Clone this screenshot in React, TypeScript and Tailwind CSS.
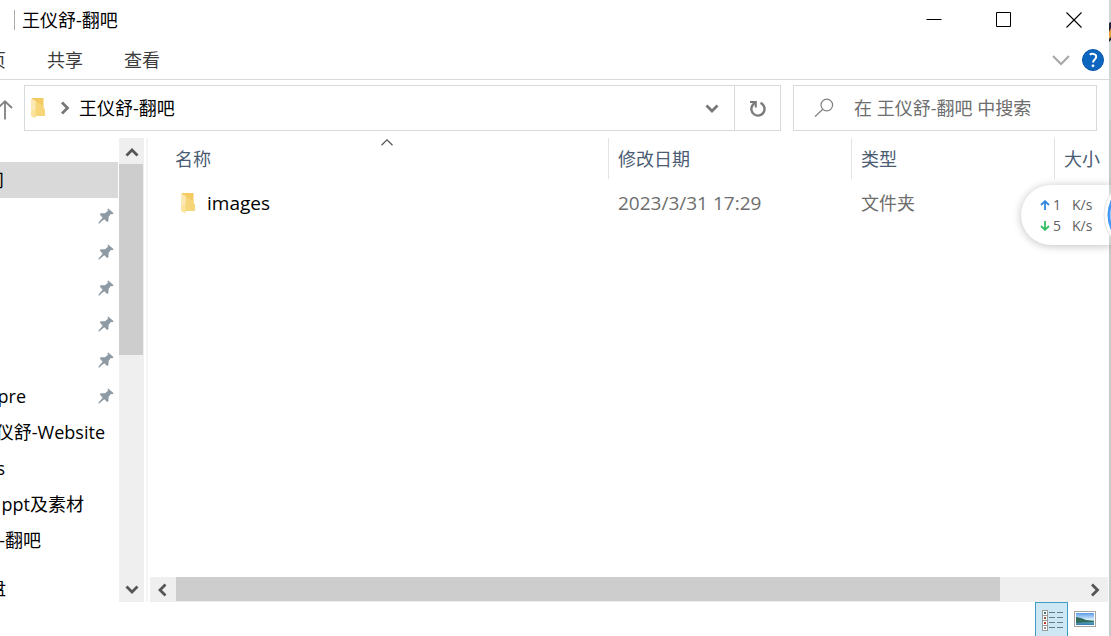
import React from 'react';

type NavEntry = { label: string; width: string; pinned?: boolean; selected?: boolean; gapAbove?: boolean };

const entries: NavEntry[] = [
  { label: '问', width: 'w-1', selected: true },
  { label: '', width: 'w-0', pinned: true },
  { label: '', width: 'w-0', pinned: true },
  { label: '', width: 'w-0', pinned: true },
  { label: '', width: 'w-0', pinned: true },
  { label: '', width: 'w-0', pinned: true },
  { label: 'pre', width: 'w-[26px]', pinned: true },
  { label: '仪舒-Website', width: 'w-[105px]' },
  { label: 's', width: 'w-[5px]' },
  { label: 'ppt及素材', width: 'w-[84px]' },
  { label: '-翻吧', width: 'w-[41px]' },
  { label: '盘', width: 'w-[6px]', gapAbove: true },
];

function FolderIcon() {
  return (
    <svg viewBox="0 0 15 21" className="h-[21px] w-[15px] shrink-0" aria-hidden="true">
      <path d="M1 0H12.5V10L14 11.5V18H1Z" fill="#f3cb62" />
      <path d="M4 3L12.5 8V10.5L14 12V18H4Z" fill="#f7d67a" />
      <path d="M0 0.5L4.5 3V20.5L0 18Z" fill="#fce39c" />
      <path d="M0 0.5L4.5 3V11L0 13Z" fill="#fbe8b4" />
    </svg>
  );
}

function PinIcon() {
  return (
    <svg viewBox="0 0 16 16" className="h-4 w-4 shrink-0" fill="#8f9ba4" aria-hidden="true">
      <path d="M10.2 0.4L15.7 5.2L14.2 6.3L12.8 6L10.6 9L10.4 13.2L9.2 14L6.2 11.3L1 15.8L0.2 15.1L4.6 9.8L1.8 6.6L2.7 5.2L7 5.2L10 2.8L9.5 1.2Z" />
    </svg>
  );
}

type Direction = 'up' | 'down' | 'left' | 'right';
const chevrons: Record<Direction, string> = {
  up: 'M1.5 9.5L7 4L12.5 9.5',
  down: 'M1.5 4.5L7 10L12.5 4.5',
  left: 'M9.5 1.5L4 7L9.5 12.5',
  right: 'M4 1.5L9.5 7L4 12.5',
};

function Chevron({ direction, color }: { direction: Direction; color: string }) {
  return (
    <svg viewBox="0 0 14 14" className="h-[14px] w-[14px] shrink-0" fill="none" stroke={color} strokeWidth="2.8" aria-hidden="true">
      <path d={chevrons[direction]} />
    </svg>
  );
}

function TitleBar() {
  return (
    <header className="flex h-10 shrink-0 items-center pl-[14px]">
      <span className="h-5 w-px bg-[#a8a8a8]" />
      <h1 className="flex-1 pl-[7px] text-black">王仪舒-翻吧</h1>
      <button aria-label="最小化" className="flex h-10 w-[70px] items-center justify-center">
        <svg viewBox="0 0 16 16" className="h-4 w-4" stroke="#000" fill="none"><path d="M0.5 7.5H15.5" /></svg>
      </button>
      <button aria-label="最大化" className="flex h-10 w-[70px] items-center justify-center">
        <svg viewBox="0 0 16 16" className="h-4 w-4" stroke="#000" fill="none"><path d="M0.5 0.5H14.5V14.5H0.5Z" /></svg>
      </button>
      <button aria-label="关闭" className="flex h-10 w-[70px] items-center justify-center">
        <svg viewBox="0 0 16 16" className="h-4 w-4" stroke="#000" fill="none"><path d="M0.5 0.5L15.5 15.5M15.5 0.5L0.5 15.5" strokeWidth="1.1" /></svg>
      </button>
    </header>
  );
}

function Ribbon() {
  return (
    <div className="flex h-10 shrink-0 items-center border-b border-[#d9dadb] text-[#3c3c3c]">
      <button className="flex w-[6px] justify-end overflow-hidden whitespace-nowrap">页</button>
      <button className="ml-[41px]">共享</button>
      <button className="ml-[41px]">查看</button>
      <button aria-label="展开功能区" className="mr-3 ml-auto">
        <svg viewBox="0 0 18 12" className="h-3 w-[18px]" fill="none" stroke="#a6a6a6" strokeWidth="2"><path d="M1 2L9 10L17 2" /></svg>
      </button>
      <button aria-label="帮助" className="mr-[5px]">
        <svg viewBox="0 0 22 22" className="h-[22px] w-[22px]" fill="none">
          <circle cx="11" cy="11" r="10.5" fill="#0c66bf" stroke="#0a55a5" />
          <path d="M7.8 5.8C9 4.6 14.2 4 14.2 7.8C14.2 10.4 11 10.6 11 13.6" stroke="#fff" strokeWidth="2" />
          <circle cx="11" cy="16.8" r="1.4" fill="#fff" />
        </svg>
      </button>
    </div>
  );
}

function AddressBar() {
  return (
    <div className="flex shrink-0 items-center pt-[5px] pr-3 pb-[7px]">
      <button aria-label="向上" className="w-6 shrink-0 pt-1">
        <svg viewBox="0 0 24 20" className="h-5 w-6" fill="none" stroke="#808080" strokeWidth="1.8"><path d="M5 1V19.5M-2 8L5 1.3L12 8" /></svg>
      </button>
      <div className="flex h-[46px] flex-1 items-center border border-[#d9dadb] pl-[6px]">
        <FolderIcon />
        <span className="ml-3"><Chevron direction="right" color="#777" /></span>
        <span className="ml-[7px] flex-1 text-black">王仪舒-翻吧</span>
        <button aria-label="历史记录" className="flex h-full w-[45px] items-center justify-center"><Chevron direction="down" color="#777" /></button>
        <button aria-label="刷新" className="flex h-full w-[46px] items-center justify-center border-l border-[#d9dadb]">
          <svg viewBox="0 0 18 18" className="h-[18px] w-[18px]" fill="none" stroke="#7b7b7b" strokeWidth="2.4">
            <path d="M11.5 3.9A6.6 6.6 0 1 1 4 5.6L6.5 3.4" />
            <path d="M1 3H6.8V8.6" strokeWidth="2" />
          </svg>
        </button>
      </div>
      <label className="ml-3 flex h-[46px] w-[304px] items-center border border-[#d9dadb] pl-5">
        <svg viewBox="0 0 20 20" className="h-5 w-5 shrink-0" fill="none" stroke="#808080" strokeWidth="1.2" aria-hidden="true">
          <circle cx="12.8" cy="7" r="5.8" /><path d="M8.8 11.2L1 18.5" />
        </svg>
        <input
          type="text"
          aria-label="搜索"
          placeholder="在 王仪舒-翻吧 中搜索"
          className="ml-5 min-w-0 flex-1 bg-transparent outline-none placeholder:text-[#6d6d6d] placeholder:opacity-100"
        />
      </label>
    </div>
  );
}

function Sidebar() {
  return (
    <nav className="flex w-[148px] shrink-0">
      <ul className="flex-1 overflow-hidden pt-6">
        {entries.map((entry, i) => (
          <li
            key={i}
            className={`flex h-9 items-center text-black ${entry.selected ? 'mr-px bg-[#d9d9d9]' : ''} ${entry.gapAbove ? 'mt-3' : ''}`}
          >
            <span className={`flex shrink-0 justify-end overflow-hidden whitespace-nowrap ${entry.width}`}>{entry.label}</span>
            {entry.pinned && <span className="mr-[5px] ml-auto"><PinIcon /></span>}
          </li>
        ))}
      </ul>
      <div className="flex w-[25px] flex-col bg-[#efefef]">
        <button aria-label="向上滚动" className="flex h-[26px] shrink-0 items-center justify-center pt-1"><Chevron direction="up" color="#555" /></button>
        <div className="mr-px h-[191px] bg-[#cdcdcd]" />
        <button aria-label="向下滚动" className="mt-auto flex h-[26px] shrink-0 items-center justify-center"><Chevron direction="down" color="#555" /></button>
      </div>
      <div className="ml-[2px] w-[2px] bg-[#f5f5f5]" />
    </nav>
  );
}

function FileList() {
  return (
    <main className="flex min-w-0 flex-1 flex-col">
      <div className="overflow-hidden pl-[18px]">
        <table className="w-full table-fixed border-separate border-spacing-0 text-left whitespace-nowrap">
          <colgroup>
            <col />
            <col className="w-[243px]" />
            <col className="w-[203px]" />
            <col className="w-[55px]" />
          </colgroup>
          <thead className="text-[#4a5c73]">
            <tr className="h-[41px]">
              <th className="relative p-0 pl-[9px] font-normal">
                名称
                <svg viewBox="0 0 12 7" className="absolute top-px left-1/2 h-[7px] w-3 -translate-x-1/2" fill="none" stroke="#555" strokeWidth="1.2" aria-hidden="true">
                  <path d="M0.5 6.2L6 0.8L11.5 6.2" />
                </svg>
              </th>
              <th className="border-l border-[#e3e3e3] p-0 pl-[9px] font-normal">修改日期</th>
              <th className="border-l border-[#e3e3e3] p-0 pl-[9px] font-normal">类型</th>
              <th className="border-l border-[#e3e3e3] p-0 pl-[9px] font-normal">大小</th>
            </tr>
          </thead>
          <tbody className="text-[#6d6d6d]">
            <tr className="h-12">
              <td className="p-0 pl-[15px]">
                <span className="flex items-center gap-[11px] text-[19px] text-black"><FolderIcon />images</span>
              </td>
              <td className="p-0 pl-[10px] text-[19px]">2023/3/31 17:29</td>
              <td className="p-0 pl-[10px]">文件夹</td>
              <td className="p-0" />
            </tr>
          </tbody>
        </table>
      </div>
      <div className="mt-auto mr-px ml-[2px] flex h-[25px] shrink-0 bg-[#efefef]">
        <button aria-label="向左滚动" className="flex w-[26px] items-center justify-center"><Chevron direction="left" color="#555" /></button>
        <div className="mb-px flex-1 bg-[#cdcdcd]" />
        <button aria-label="向右滚动" className="flex w-[108px] items-center justify-end pr-[6px]"><Chevron direction="right" color="#555" /></button>
      </div>
    </main>
  );
}

function StatusBar() {
  const dots = ['#3c7a78', '#8a5a3c', '#c0392b', '#999999'];
  return (
    <footer className="flex h-[34px] shrink-0 items-stretch justify-end pr-[13px]">
      <button aria-label="详细信息" className="flex w-[33px] justify-center border border-b-0 border-[#3f9cc4] bg-[#cde8f4] pt-[7px]">
        <svg viewBox="0 0 22 22" className="h-[22px] w-[22px]" fill="none">
          {dots.map((c, i) => (
            <g key={c}>
              <rect x="1.5" y={0.5 + i * 5} width="5" height="5" fill="#fff" stroke="#9a9a9a" />
              <rect x="3" y={2 + i * 5} width="2" height="2" fill={c} />
              <path d={`M8 ${2.5 + i * 5}H14M16 ${2.5 + i * 5}H22`} stroke="#66808a" />
            </g>
          ))}
        </svg>
      </button>
      <button aria-label="大图标" className="ml-[6px] flex pt-[9px]">
        <svg viewBox="0 0 22 16" className="h-4 w-[22px]">
          <defs>
            <linearGradient id="sky" x1="0" y1="0" x2="0" y2="1">
              <stop offset="0" stopColor="#5b9bea" /><stop offset="0.55" stopColor="#d8eefa" /><stop offset="0.75" stopColor="#5aa7b8" /><stop offset="1" stopColor="#3478b5" />
            </linearGradient>
          </defs>
          <rect x="0.5" y="0.5" width="21" height="15" fill="#fff" stroke="#a4a4a4" />
          <rect x="2" y="2" width="18" height="12" fill="url(#sky)" />
          <path d="M2 6L7 7L12 9L20 10V11L8 11.5L2 12Z" fill="#326b5a" />
        </svg>
      </button>
    </footer>
  );
}

function SpeedRow({ up, value }: { up?: boolean; value: string }) {
  return (
    <div className="flex h-[21px] items-center">
      <svg viewBox="0 0 10 10" className="h-[10px] w-[10px]" fill="none" stroke={up ? '#2f86e0' : '#32bd62'} strokeWidth="1.8" aria-hidden="true">
        <path d={up ? 'M5 10V1.2M1 5L5 1.2L9 5' : 'M5 0V8.8M1 5L5 8.8L9 5'} />
      </svg>
      <span className="w-[22px] pl-[3px]">{value}</span>
      <span>K/s</span>
    </div>
  );
}

function SpeedWidget() {
  return (
    <aside className="absolute top-[185px] right-0 flex h-[60px] w-[90px] flex-col justify-center overflow-hidden rounded-l-full bg-white pl-[19px] text-sm text-[#5f5f5f] shadow-[0_1px_8px_rgba(0,0,0,0.25)]">
      <SpeedRow up value="1" />
      <SpeedRow value="5" />
      <svg viewBox="0 0 8 60" className="absolute top-0 right-0 h-[60px] w-2" fill="none" aria-hidden="true">
        <rect x="6" width="2" height="60" fill="#d4d4d4" />
        <circle cx="39" cy="30" r="38.5" fill="#e6e6e6" />
        <circle cx="39" cy="30" r="37.5" fill="#fff" />
        <circle cx="39" cy="30" r="34.5" fill="#4397f7" />
        <path d="M8 23C6.4 27 6.4 33 8 37Z" fill="#9ccafb" />
      </svg>
    </aside>
  );
}

export default function App() {
  return (
    <div className="relative flex h-screen overflow-hidden bg-[#c9c9c9] font-['Open_Sans','Noto_Sans_CJK_SC',sans-serif] text-[18px] leading-6">
      <div className="flex min-w-0 flex-1 flex-col bg-white">
        <TitleBar />
        <Ribbon />
        <AddressBar />
        <div className="flex min-h-0 flex-1">
          <Sidebar />
          <FileList />
        </div>
        <StatusBar />
      </div>
      <svg viewBox="0 0 2 636" preserveAspectRatio="xMinYMin slice" className="h-full w-[2px] shrink-0" aria-hidden="true">
        <path d="M0 0H2V120H0Z" fill="#d6d6d6" />
        <path d="M0 23L2 22V40L0 42Z" fill="#22263a" />
        <path d="M0 32L2 28V37L0 39Z" fill="#e2a13a" />
      </svg>
      <SpeedWidget />
    </div>
  );
}
